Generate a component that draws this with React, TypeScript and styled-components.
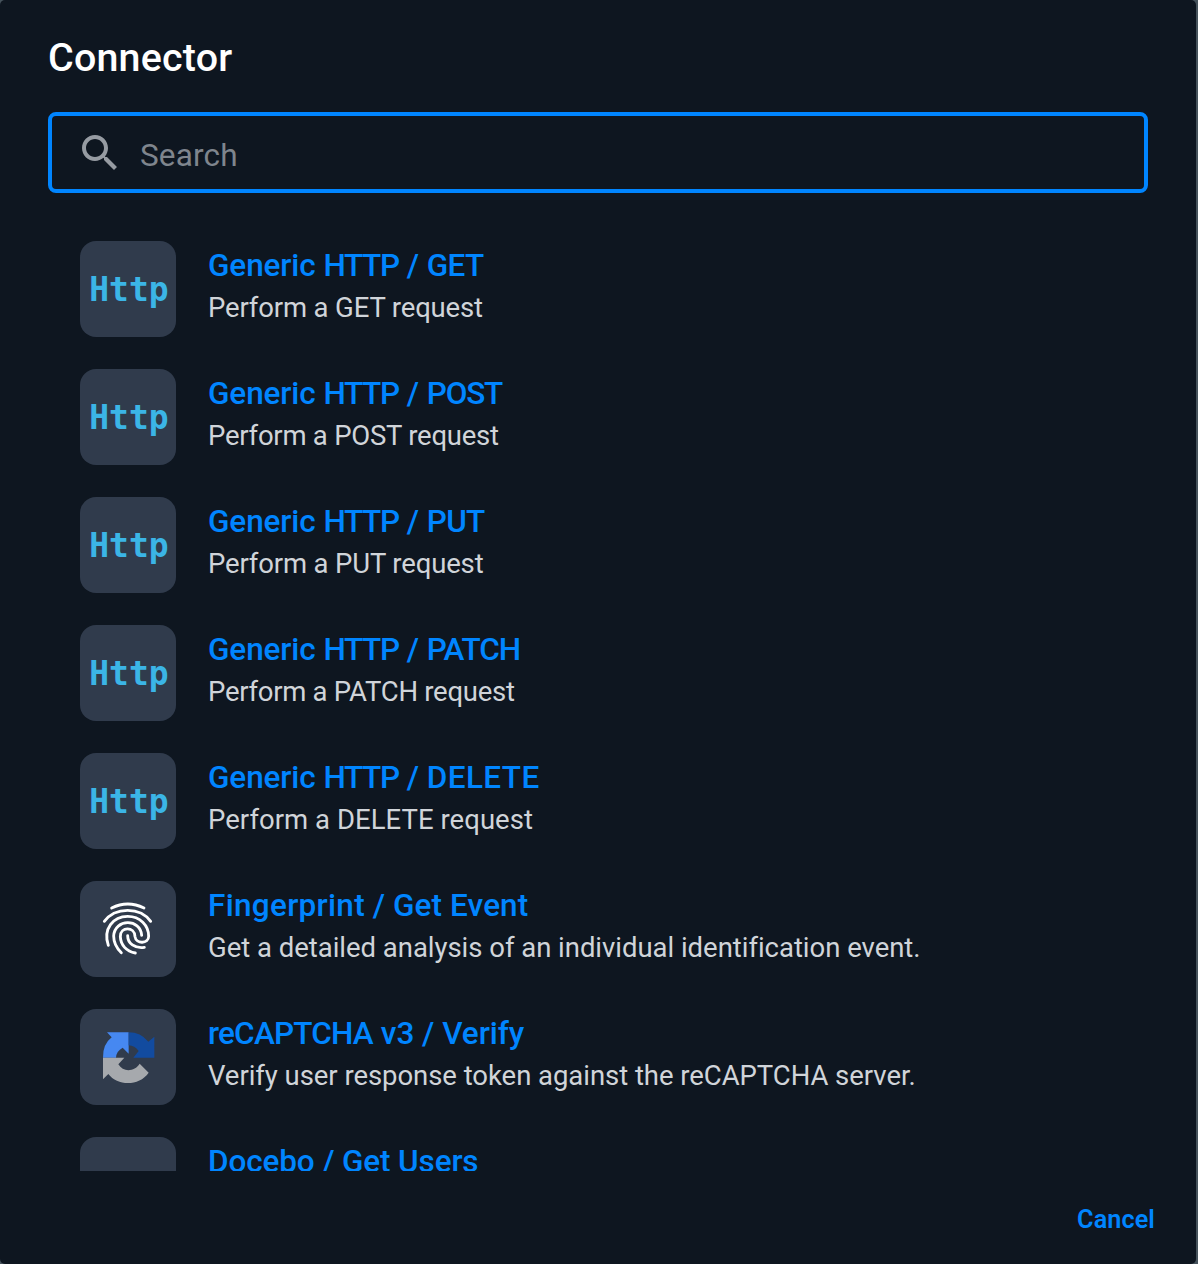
import React from "react";
import styled, { createGlobalStyle } from "styled-components";

const Global = createGlobalStyle`
  * { box-sizing: border-box; }
  body { margin: 0; background: #46535c; }
`;

const Dialog = styled.section`
  width: 1196px;
  height: 1264px;
  padding: 34px 48px 0;
  border-radius: 5px;
  background: #0e1620;
  display: flex;
  flex-direction: column;
  font-family: Roboto, "Liberation Sans", sans-serif;
  overflow: hidden;
`;

const Heading = styled.h1`
  margin: 0 0 30px;
  font-size: 39.4px;
  line-height: 48px;
  font-weight: 500;
  letter-spacing: 0.2px;
  color: #fff;
`;

const SearchBox = styled.label`
  display: flex;
  align-items: center;
  flex: none;
  width: 1100px;
  height: 81px;
  padding-left: 24px;
  gap: 16px;
  border: 4px solid #0085ff;
  border-radius: 8px;
  color: #969ba2;
`;

const SearchIcon = styled.svg`
  width: 48px;
  height: 48px;
`;

const SearchInput = styled.input`
  flex: 1;
  padding: 5px 0 0;
  border: 0;
  outline: 0;
  background: transparent;
  font: 400 31.5px Roboto, "Liberation Sans", sans-serif;
  letter-spacing: 0.15px;
  color: #fff;
  &::placeholder { color: #7f858d; opacity: 1; }
`;

const List = styled.ul`
  display: flex;
  flex-direction: column;
  gap: 32px;
  flex: none;
  height: 978px;
  margin: 0;
  padding: 48px 32px 0;
  list-style: none;
  overflow: hidden;
`;

const Row = styled.li`
  display: flex;
  flex: none;
  gap: 32px;
  height: 96px;
`;

const Tile = styled.div`
  display: flex;
  align-items: center;
  justify-content: center;
  flex: none;
  width: 96px;
  height: 96px;
  border-radius: 16px;
  background: #303b4c;
`;

const HttpMark = styled.span`
  padding-left: 2px;
  font: 700 33px "DejaVu Sans Mono", monospace;
  color: #3bb5e6;
`;

const TileArt = styled.svg`
  width: 96px;
  height: 96px;
`;

const Copy = styled.div`
  display: flex;
  flex-direction: column;
  padding-top: 3px;
  white-space: nowrap;
`;

const Name = styled.h2`
  margin: 0;
  font-size: 31.5px;
  line-height: 44px;
  font-weight: 500;
  color: #0085ff;
`;

const Tracked = styled.span<{ $track: number }>`
  letter-spacing: ${(p) => p.$track}px;
`;

const Description = styled.p<{ $track: number }>`
  margin: 0;
  font-size: 27.5px;
  line-height: 40px;
  letter-spacing: ${(p) => p.$track}px;
  color: #d0d4d9;
`;

const Footer = styled.footer`
  display: flex;
  justify-content: flex-end;
  padding: 29px 0 0;
  margin-right: -7px;
`;

const CancelButton = styled.button`
  padding: 0;
  border: 0;
  background: none;
  font: 600 25.2px/40px Roboto, "Liberation Sans", sans-serif;
  letter-spacing: 0.1px;
  color: #0085ff;
`;

const Fingerprint = () => (
  <TileArt viewBox="12 15 288 288" fill="none" stroke="#fff" strokeWidth="8.5" strokeLinecap="round">
    <path d="M107 96Q155 72 204 96" />
    <path d="M85 136C118 92 192 92 224 136" />
    <path d="M97 208C80 158 112 121 155 121C192 121 218 148 218 181C218 204 180 205 177 182C176 151 133 151 133 182C134 207 151 226 178 231" />
    <path d="M136 230C114 209 113 190 113 180C116 127 194 127 197 178" />
    <path d="M155 179C155 202 176 218 205 214" />
  </TileArt>
);

const Recaptcha = () => (
  <TileArt viewBox="12 12 288 288">
    <path fill="#4688f1" d="M93 82H158V146L140 128Q121 138 120 158H81Q80 118 107 97Z" />
    <path fill="#124b9f" d="M158 82Q194 82 217 110L235 95V158H172L188 138Q176 122 158 121Z" />
    <path fill="#a6a9ad" d="M81 158H145L127 178C142 203 176 200 191 176L218 203C189 245 124 243 97 207L81 223Z" />
  </TileArt>
);

type Kind = "http" | "fingerprint" | "recaptcha" | "none";
type Part = [text: string, track: number];
interface Connector {
  kind: Kind;
  name: Part[];
  text: string;
  track: number;
}

const genericHttp = (method: string, nameTrack: number, track: number): Connector => ({
  kind: "http",
  name: [["Generic ", -0.1], ["HTTP", -1.3], [" / ", 0], [method, nameTrack]],
  text: `Perform a ${method} request`,
  track,
});

const connectors: Connector[] = [
  genericHttp("GET", -0.7, -0.15),
  genericHttp("POST", -1.2, -0.24),
  genericHttp("PUT", -0.7, -0.15),
  genericHttp("PATCH", -1, -0.27),
  genericHttp("DELETE", 0.4, 0.04),
  {
    kind: "fingerprint",
    name: [["Fingerprint", 0.3], [" / ", 0], ["Get Event", 0.12]],
    text: "Get a detailed analysis of an individual identification event.",
    track: -0.03,
  },
  {
    kind: "recaptcha",
    name: [["reCAPTCHA", -0.8], [" v3 / ", 0], ["Verify", -0.05]],
    text: "Verify user response token against the reCAPTCHA server.",
    track: -0.05,
  },
  { kind: "none", name: [["Docebo / Get Users", -0.14]], text: "", track: 0 },
];

const TileContent = ({ kind }: { kind: Kind }) => {
  if (kind === "http") return <HttpMark>Http</HttpMark>;
  if (kind === "fingerprint") return <Fingerprint />;
  if (kind === "recaptcha") return <Recaptcha />;
  return null;
};

export default function App() {
  return (
    <>
      <Global />
      <Dialog>
        <Heading>Connector</Heading>
        <SearchBox>
          <SearchIcon viewBox="0 0 24 24" fill="currentColor">
            <path d="M15.5 14h-.79l-.28-.27C15.41 12.59 16 11.11 16 9.5 16 5.91 13.09 3 9.5 3S3 5.91 3 9.5 5.91 16 9.5 16c1.61 0 3.09-.59 4.23-1.57l.27.28v.79l5 4.99L20.49 19l-4.99-5zm-6 0C7.01 14 5 11.99 5 9.5S7.01 5 9.5 5 14 7.01 14 9.5 11.99 14 9.5 14z" />
          </SearchIcon>
          <SearchInput placeholder="Search" />
        </SearchBox>
        <List>
          {connectors.map((c, i) => (
            <Row key={i}>
              <Tile>
                <TileContent kind={c.kind} />
              </Tile>
              <Copy>
                <Name>
                  {c.name.map(([text, track]) => (
                    <Tracked key={text} $track={track}>{text}</Tracked>
                  ))}
                </Name>
                {c.text && <Description $track={c.track}>{c.text}</Description>}
              </Copy>
            </Row>
          ))}
        </List>
        <Footer>
          <CancelButton>Cancel</CancelButton>
        </Footer>
      </Dialog>
    </>
  );
}
